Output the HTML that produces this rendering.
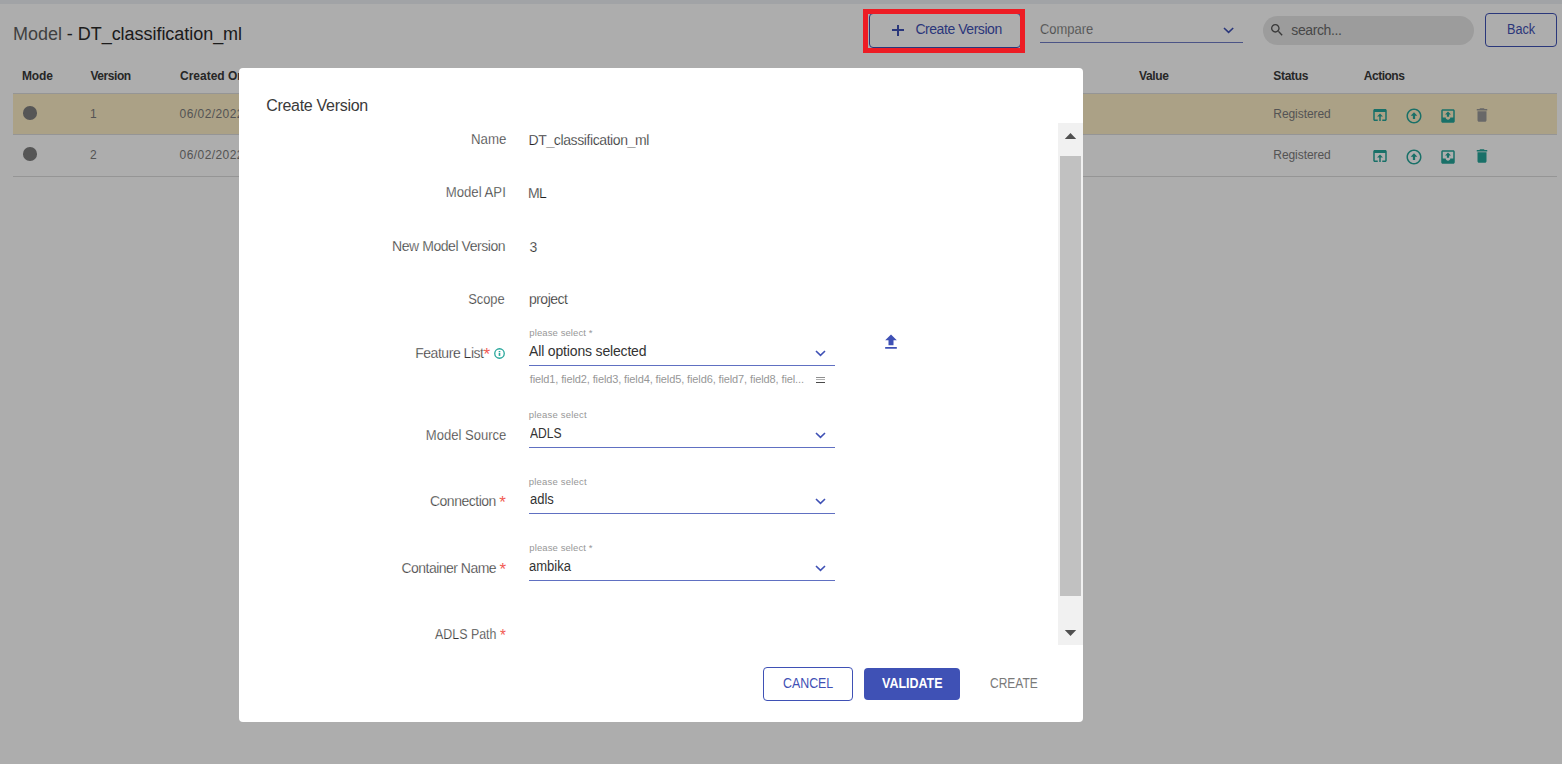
<!DOCTYPE html>
<html><head><meta charset="utf-8"><style>
html,body{margin:0;padding:0;width:1562px;height:764px;overflow:hidden;background:#fff;position:relative;font-family:"Liberation Sans",sans-serif}
.a{position:absolute;display:block}
.t{position:absolute;white-space:nowrap}
#overlay{position:absolute;left:0;top:0;width:1562px;height:764px;background:rgba(0,0,0,0.32)}
#modal{position:absolute;left:239px;top:68px;width:844px;height:654px;background:#fff;border-radius:4px;overflow:hidden;box-shadow:none}
#minner{position:absolute;left:-239px;top:-68px;width:1562px;height:764px}
</style></head><body>
<div class="a" style="left:0;top:0;width:1562px;height:4px;background:#eef0f5"></div><div class="a" style="left:869px;top:13px;width:152px;height:35px;box-sizing:border-box;border:1px solid #3f51b5;border-radius:4px"></div><div class="a" style="left:892px;top:29.4px;width:11.8px;height:1.6px;background:#3f51b5"></div><div class="a" style="left:897.1px;top:24.6px;width:1.6px;height:11.5px;background:#3f51b5"></div><div class="a" style="left:1040px;top:42px;width:203px;height:1px;background:#6f7cc6"></div><svg class="a" style="left:1221.40px;top:25.30px" width="15.20" height="10.30"><path d="M3 3 L7.60 7.30 L12.20 3" fill="none" stroke="#3f51b5" stroke-width="1.6" stroke-linecap="butt"/></svg><div class="a" style="left:1263px;top:16px;width:211px;height:29px;border-radius:14.5px;background:#e6e6e6"></div><svg class="a" style="left:1268.5px;top:22.4px" width="16" height="16" viewBox="0 0 24 24"><path d="M15.5 14h-.79l-.28-.27C15.41 12.59 16 11.11 16 9.5 16 5.91 13.09 3 9.5 3S3 5.91 3 9.5 5.91 16 9.5 16c1.61 0 3.09-.59 4.23-1.57l.27.28v.79l5 4.99L20.49 19l-4.99-5zm-6 0C7.01 14 5 11.99 5 9.5S7.01 5 9.5 5 14 7.01 14 9.5 11.99 14 9.5 14z" fill="#555555"/></svg><div class="a" style="left:1485px;top:13px;width:72px;height:34px;box-sizing:border-box;border:1px solid #3f51b5;border-radius:4px"></div><div class="a" style="left:13px;top:93px;width:1544px;height:1px;background:#dcdcdc"></div><div class="a" style="left:13px;top:94px;width:1544px;height:40px;background:#fdeec6"></div><div class="a" style="left:13px;top:134px;width:1544px;height:1px;background:#dcdcdc"></div><div class="a" style="left:13px;top:176px;width:1544px;height:1px;background:#dcdcdc"></div><div class="a" style="left:23.2px;top:106.2px;width:13.6px;height:13.6px;border-radius:50%;background:#7f7f7f"></div><svg class="a" style="left:1371.2px;top:105.8px" width="18" height="18" viewBox="0 0 24 24"><path d="M19 4H5c-1.11 0-2 .9-2 2v12c0 1.1.89 2 2 2h4v-2H5V8h14v10h-4v2h4c1.1 0 2-.9 2-2V6c0-1.1-.89-2-2-2zm-7 6l-4 4h3v6h2v-6h3l-4-4z" fill="#26a69a"/></svg><svg class="a" style="left:1405.4px;top:106.6px" width="18" height="18" viewBox="0 0 24 24"><path d="M12 2C6.48 2 2 6.48 2 12s4.48 10 10 10 10-4.48 10-10S17.52 2 12 2zm0 18c-4.41 0-8-3.59-8-8s3.59-8 8-8 8 3.59 8 8-3.59 8-8 8zM12 7l-4.5 4.5h3V16h3v-4.5h3z" fill="#26a69a"/></svg><svg class="a" style="left:1439.2px;top:106.9px" width="18" height="18" viewBox="0 0 24 24"><path d="M19 3H5c-1.1 0-2 .9-2 2v14c0 1.1.9 2 2 2h14c1.1 0 2-.9 2-2V5c0-1.1-.9-2-2-2zm0 11h-4c0 1.66-1.35 3-3 3s-3-1.34-3-3H5V5h14v9zM8 10h2.5v3h3v-3H16l-4-4z" fill="#26a69a"/></svg><svg class="a" style="left:1472.8px;top:106.2px" width="18" height="18" viewBox="0 0 24 24"><path d="M6 19c0 1.1.9 2 2 2h8c1.1 0 2-.9 2-2V7H6v12zM19 4h-3.5l-1-1h-5l-1 1H5v2h14V4z" fill="#9a9a9a"/></svg><div class="a" style="left:23.2px;top:147.2px;width:13.6px;height:13.6px;border-radius:50%;background:#7f7f7f"></div><svg class="a" style="left:1371.2px;top:146.8px" width="18" height="18" viewBox="0 0 24 24"><path d="M19 4H5c-1.11 0-2 .9-2 2v12c0 1.1.89 2 2 2h4v-2H5V8h14v10h-4v2h4c1.1 0 2-.9 2-2V6c0-1.1-.89-2-2-2zm-7 6l-4 4h3v6h2v-6h3l-4-4z" fill="#26a69a"/></svg><svg class="a" style="left:1405.4px;top:147.6px" width="18" height="18" viewBox="0 0 24 24"><path d="M12 2C6.48 2 2 6.48 2 12s4.48 10 10 10 10-4.48 10-10S17.52 2 12 2zm0 18c-4.41 0-8-3.59-8-8s3.59-8 8-8 8 3.59 8 8-3.59 8-8 8zM12 7l-4.5 4.5h3V16h3v-4.5h3z" fill="#26a69a"/></svg><svg class="a" style="left:1439.2px;top:147.9px" width="18" height="18" viewBox="0 0 24 24"><path d="M19 3H5c-1.1 0-2 .9-2 2v14c0 1.1.9 2 2 2h14c1.1 0 2-.9 2-2V5c0-1.1-.9-2-2-2zm0 11h-4c0 1.66-1.35 3-3 3s-3-1.34-3-3H5V5h14v9zM8 10h2.5v3h3v-3H16l-4-4z" fill="#26a69a"/></svg><svg class="a" style="left:1472.8px;top:147.2px" width="18" height="18" viewBox="0 0 24 24"><path d="M6 19c0 1.1.9 2 2 2h8c1.1 0 2-.9 2-2V7H6v12zM19 4h-3.5l-1-1h-5l-1 1H5v2h14V4z" fill="#26a69a"/></svg>
<span class="t" id="title" style="top:23.66px;font-size:18px;line-height:21.6px;color:#2a2a2a;font-weight:400;left:13.00px;letter-spacing:-0.037px;"><span style="color:#5f5f5f">Model </span>- DT_classification_ml</span><span class="t" id="cvbtn" style="top:20.55px;font-size:14px;line-height:16.8px;color:#3f51b5;font-weight:400;left:915.40px;letter-spacing:-0.446px;">Create Version</span><span class="t" id="compare" style="top:20.55px;font-size:14px;line-height:16.8px;color:#5a5a5a;font-weight:400;-webkit-text-stroke:0.25px #fff;transform:scaleX(0.9244);transform-origin:left center;left:1040.30px;letter-spacing:0.000px;">Compare</span><span class="t" id="search" style="top:21.75px;font-size:14px;line-height:16.8px;color:#6a6a6a;font-weight:400;left:1291.30px;letter-spacing:-0.400px;">search...</span><span class="t" id="back" style="top:20.65px;font-size:14px;line-height:16.8px;color:#3f51b5;font-weight:400;transform:scaleX(0.9058);transform-origin:left center;left:1507.20px;letter-spacing:0.000px;">Back</span><span class="t" id="hmode" style="top:68.64px;font-size:12px;line-height:14.4px;color:#3a3a3a;font-weight:700;left:22.00px;letter-spacing:-0.133px;">Mode</span><span class="t" id="hver" style="top:68.64px;font-size:12px;line-height:14.4px;color:#3a3a3a;font-weight:700;left:90.40px;letter-spacing:-0.433px;">Version</span><span class="t" id="hcreated" style="top:68.64px;font-size:12px;line-height:14.4px;color:#3a3a3a;font-weight:700;left:180.00px;letter-spacing:0.000px;">Created On</span><span class="t" id="hvalue" style="top:68.64px;font-size:12px;line-height:14.4px;color:#3a3a3a;font-weight:700;left:1139.00px;letter-spacing:-0.350px;">Value</span><span class="t" id="hstatus" style="top:68.64px;font-size:12px;line-height:14.4px;color:#3a3a3a;font-weight:700;left:1273.30px;letter-spacing:-0.320px;">Status</span><span class="t" id="hactions" style="top:68.64px;font-size:12px;line-height:14.4px;color:#3a3a3a;font-weight:700;left:1363.80px;letter-spacing:-0.500px;">Actions</span><span class="t" id="v0" style="top:106.74px;font-size:12px;line-height:14.4px;color:#7c7c7c;font-weight:400;left:90.00px;letter-spacing:0.000px;">1</span><span class="t" id="d0" style="top:106.74px;font-size:12px;line-height:14.4px;color:#7c7c7c;font-weight:400;left:179.60px;letter-spacing:0.420px;">06/02/2022 10:15:32</span><span class="t" id="r0" style="top:106.84px;font-size:12px;line-height:14.4px;color:#7c7c7c;font-weight:400;left:1273.30px;letter-spacing:-0.067px;">Registered</span><span class="t" id="v1" style="top:147.74px;font-size:12px;line-height:14.4px;color:#7c7c7c;font-weight:400;left:90.00px;letter-spacing:0.000px;">2</span><span class="t" id="d1" style="top:147.74px;font-size:12px;line-height:14.4px;color:#7c7c7c;font-weight:400;left:179.60px;letter-spacing:0.420px;">06/02/2022 10:15:32</span><span class="t" id="r1" style="top:147.84px;font-size:12px;line-height:14.4px;color:#7c7c7c;font-weight:400;left:1273.30px;letter-spacing:-0.067px;">Registered</span>
<div id="overlay"></div>
<div class="a" style="left:863px;top:9px;width:162px;height:44px;box-sizing:border-box;border:5px solid #ed1c24"></div>
<div id="modal"><div id="minner">
<div class="a" style="left:1058px;top:123px;width:25px;height:522px;background:#f1f1f1"></div><div class="a" style="left:1060px;top:156px;width:21px;height:440px;background:#c1c1c1"></div><svg class="a" style="left:1064px;top:132px" width="13" height="8"><path d="M0.8 7 L6.5 1 L12.2 7z" fill="#505050"/></svg><svg class="a" style="left:1064px;top:628.5px" width="13" height="8"><path d="M0.8 1 L6.5 7 L12.2 1z" fill="#505050"/></svg><svg class="a" style="left:494.3px;top:347.8px" width="11" height="11" viewBox="0 0 11 11"><circle cx="5.5" cy="5.5" r="4.75" fill="none" stroke="#26a69a" stroke-width="1.3"/><rect x="4.7" y="5.0" width="1.6" height="2.9" fill="#26a69a"/><rect x="4.7" y="3.0" width="1.6" height="1.3" fill="#26a69a"/></svg><div class="a" style="left:529px;top:364.70px;width:306px;height:1.2px;background:#6070c2"></div><svg class="a" style="left:813.00px;top:348.10px" width="15.00" height="10.30"><path d="M3 3 L7.50 7.30 L12.00 3" fill="none" stroke="#3f51b5" stroke-width="1.6" stroke-linecap="butt"/></svg><div class="a" style="left:529px;top:446.50px;width:306px;height:1.2px;background:#6070c2"></div><svg class="a" style="left:813.00px;top:429.90px" width="15.00" height="10.30"><path d="M3 3 L7.50 7.30 L12.00 3" fill="none" stroke="#3f51b5" stroke-width="1.6" stroke-linecap="butt"/></svg><div class="a" style="left:529px;top:512.50px;width:306px;height:1.2px;background:#6070c2"></div><svg class="a" style="left:813.00px;top:495.90px" width="15.00" height="10.30"><path d="M3 3 L7.50 7.30 L12.00 3" fill="none" stroke="#3f51b5" stroke-width="1.6" stroke-linecap="butt"/></svg><div class="a" style="left:529px;top:579.90px;width:306px;height:1.2px;background:#6070c2"></div><svg class="a" style="left:813.00px;top:563.30px" width="15.00" height="10.30"><path d="M3 3 L7.50 7.30 L12.00 3" fill="none" stroke="#3f51b5" stroke-width="1.6" stroke-linecap="butt"/></svg><div class="a" style="left:816.3px;top:376.6px;width:8.5px;height:1px;background:#8f8f8f"></div><div class="a" style="left:816.3px;top:379.4px;width:8.5px;height:1px;background:#b0b0b0"></div><div class="a" style="left:816.3px;top:382.1px;width:8.5px;height:1px;background:#4a4a4a"></div><svg class="a" style="left:881px;top:332.4px" width="20" height="20" viewBox="0 0 24 24"><path d="M9 16h6v-6h4l-7-7-7 7h4zm-4 2h14v2H5z" fill="#3f51b5"/></svg><div class="a" style="left:763px;top:667px;width:90px;height:34px;box-sizing:border-box;border:1px solid #3f51b5;border-radius:4px"></div><div class="a" style="left:864px;top:668px;width:96px;height:32px;border-radius:4px;background:#3f51b5"></div>
<span class="t" id="mtitle" style="top:95.56px;font-size:16px;line-height:19.2px;color:#3a3a3a;font-weight:400;left:266.20px;letter-spacing:-0.292px;">Create Version</span><span class="t" id="l_name" style="top:130.75px;font-size:14px;line-height:16.8px;color:#333333;font-weight:400;-webkit-text-stroke:0.25px #fff;transform:scaleX(0.9475);transform-origin:right center;right:1055.80px;letter-spacing:0.000px;">Name</span><span class="t" id="l_api" style="top:183.55px;font-size:14px;line-height:16.8px;color:#333333;font-weight:400;-webkit-text-stroke:0.25px #fff;transform:scaleX(0.9417);transform-origin:right center;right:1055.80px;letter-spacing:0.000px;">Model API</span><span class="t" id="l_nmv" style="top:237.85px;font-size:14px;line-height:16.8px;color:#333333;font-weight:400;-webkit-text-stroke:0.25px #fff;right:1056.80px;letter-spacing:-0.438px;">New Model Version</span><span class="t" id="l_scope" style="top:290.75px;font-size:14px;line-height:16.8px;color:#333333;font-weight:400;-webkit-text-stroke:0.25px #fff;transform:scaleX(0.9204);transform-origin:right center;right:1057.20px;letter-spacing:0.000px;">Scope</span><span class="t" id="l_feat" style="top:344.75px;font-size:14px;line-height:16.8px;color:#333333;font-weight:400;-webkit-text-stroke:0.25px #fff;right:1072.30px;letter-spacing:-0.467px;">Feature List<span style="color:#f25c54;font-size:17px;line-height:0;position:relative;top:2.1px;-webkit-text-stroke:0">*</span></span><span class="t" id="l_src" style="top:426.75px;font-size:14px;line-height:16.8px;color:#333333;font-weight:400;-webkit-text-stroke:0.25px #fff;transform:scaleX(0.9327);transform-origin:right center;right:1056.00px;letter-spacing:0.000px;">Model Source</span><span class="t" id="l_conn" style="top:492.75px;font-size:14px;line-height:16.8px;color:#333333;font-weight:400;-webkit-text-stroke:0.25px #fff;right:1056.60px;letter-spacing:-0.491px;">Connection <span style="color:#f25c54;font-size:17px;line-height:0;position:relative;top:2.1px;-webkit-text-stroke:0">*</span></span><span class="t" id="l_cont" style="top:559.75px;font-size:14px;line-height:16.8px;color:#333333;font-weight:400;-webkit-text-stroke:0.25px #fff;right:1056.40px;letter-spacing:-0.520px;">Container Name <span style="color:#f25c54;font-size:17px;line-height:0;position:relative;top:2.1px;-webkit-text-stroke:0">*</span></span><span class="t" id="l_path" style="top:625.75px;font-size:14px;line-height:16.8px;color:#333333;font-weight:400;-webkit-text-stroke:0.25px #fff;transform:scaleX(0.8865);transform-origin:right center;right:1056.00px;letter-spacing:0.000px;">ADLS Path <span style="color:#f25c54;font-size:17px;line-height:0;position:relative;top:2.1px;-webkit-text-stroke:0">*</span></span><span class="t" id="v_name" style="top:131.85px;font-size:14px;line-height:16.8px;color:#222222;font-weight:400;-webkit-text-stroke:0.25px #fff;left:528.60px;letter-spacing:-0.400px;">DT_classification_ml</span><span class="t" id="v_api" style="top:184.75px;font-size:14px;line-height:16.8px;color:#222222;font-weight:400;-webkit-text-stroke:0.25px #fff;left:527.90px;letter-spacing:-0.500px;">ML</span><span class="t" id="v_nmv" style="top:238.55px;font-size:14px;line-height:16.8px;color:#222222;font-weight:400;-webkit-text-stroke:0.25px #fff;left:529.40px;letter-spacing:0.000px;">3</span><span class="t" id="v_scope" style="top:291.25px;font-size:14px;line-height:16.8px;color:#222222;font-weight:400;-webkit-text-stroke:0.25px #fff;left:528.90px;letter-spacing:-0.500px;">project</span><span class="t" id="ps_feat" style="top:327.11px;font-size:9.5px;line-height:11.4px;color:#979797;font-weight:400;left:529.30px;letter-spacing:0.100px;">please select *</span><span class="t" id="s_feat" style="top:342.85px;font-size:14px;line-height:16.8px;color:#333333;font-weight:400;left:529.10px;letter-spacing:-0.168px;">All options selected</span><span class="t" id="fields" style="top:372.89px;font-size:11px;line-height:13.2px;color:#979797;font-weight:400;left:529.70px;letter-spacing:-0.117px;">field1, field2, field3, field4, field5, field6, field7, field8, fiel...</span><span class="t" id="ps_src" style="top:409.01px;font-size:9.5px;line-height:11.4px;color:#979797;font-weight:400;left:528.70px;letter-spacing:0.200px;">please select</span><span class="t" id="s_src" style="top:424.85px;font-size:14px;line-height:16.8px;color:#333333;font-weight:400;transform:scaleX(0.8645);transform-origin:left center;left:529.70px;letter-spacing:0.000px;">ADLS</span><span class="t" id="ps_conn" style="top:475.81px;font-size:9.5px;line-height:11.4px;color:#979797;font-weight:400;left:528.70px;letter-spacing:0.200px;">please select</span><span class="t" id="s_conn" style="top:490.75px;font-size:14px;line-height:16.8px;color:#333333;font-weight:400;transform:scaleX(0.9277);transform-origin:left center;left:529.70px;letter-spacing:0.000px;">adls</span><span class="t" id="ps_cont" style="top:541.71px;font-size:9.5px;line-height:11.4px;color:#979797;font-weight:400;left:529.30px;letter-spacing:0.100px;">please select *</span><span class="t" id="s_cont" style="top:557.55px;font-size:14px;line-height:16.8px;color:#333333;font-weight:400;transform:scaleX(0.9309);transform-origin:left center;left:529.30px;letter-spacing:0.000px;">ambika</span><span class="t" id="b_cancel" style="top:674.95px;font-size:14px;line-height:16.8px;color:#3f51b5;font-weight:400;transform:scaleX(0.8849);transform-origin:left center;left:783.00px;letter-spacing:0.000px;">CANCEL</span><span class="t" id="b_validate" style="top:674.95px;font-size:14px;line-height:16.8px;color:#ffffff;font-weight:700;transform:scaleX(0.8917);transform-origin:left center;left:882.00px;letter-spacing:0.000px;">VALIDATE</span><span class="t" id="b_create" style="top:674.55px;font-size:14px;line-height:16.8px;color:#7a7a7a;font-weight:400;transform:scaleX(0.8571);transform-origin:left center;left:990.00px;letter-spacing:0.000px;">CREATE</span>
</div></div>
</body></html>
